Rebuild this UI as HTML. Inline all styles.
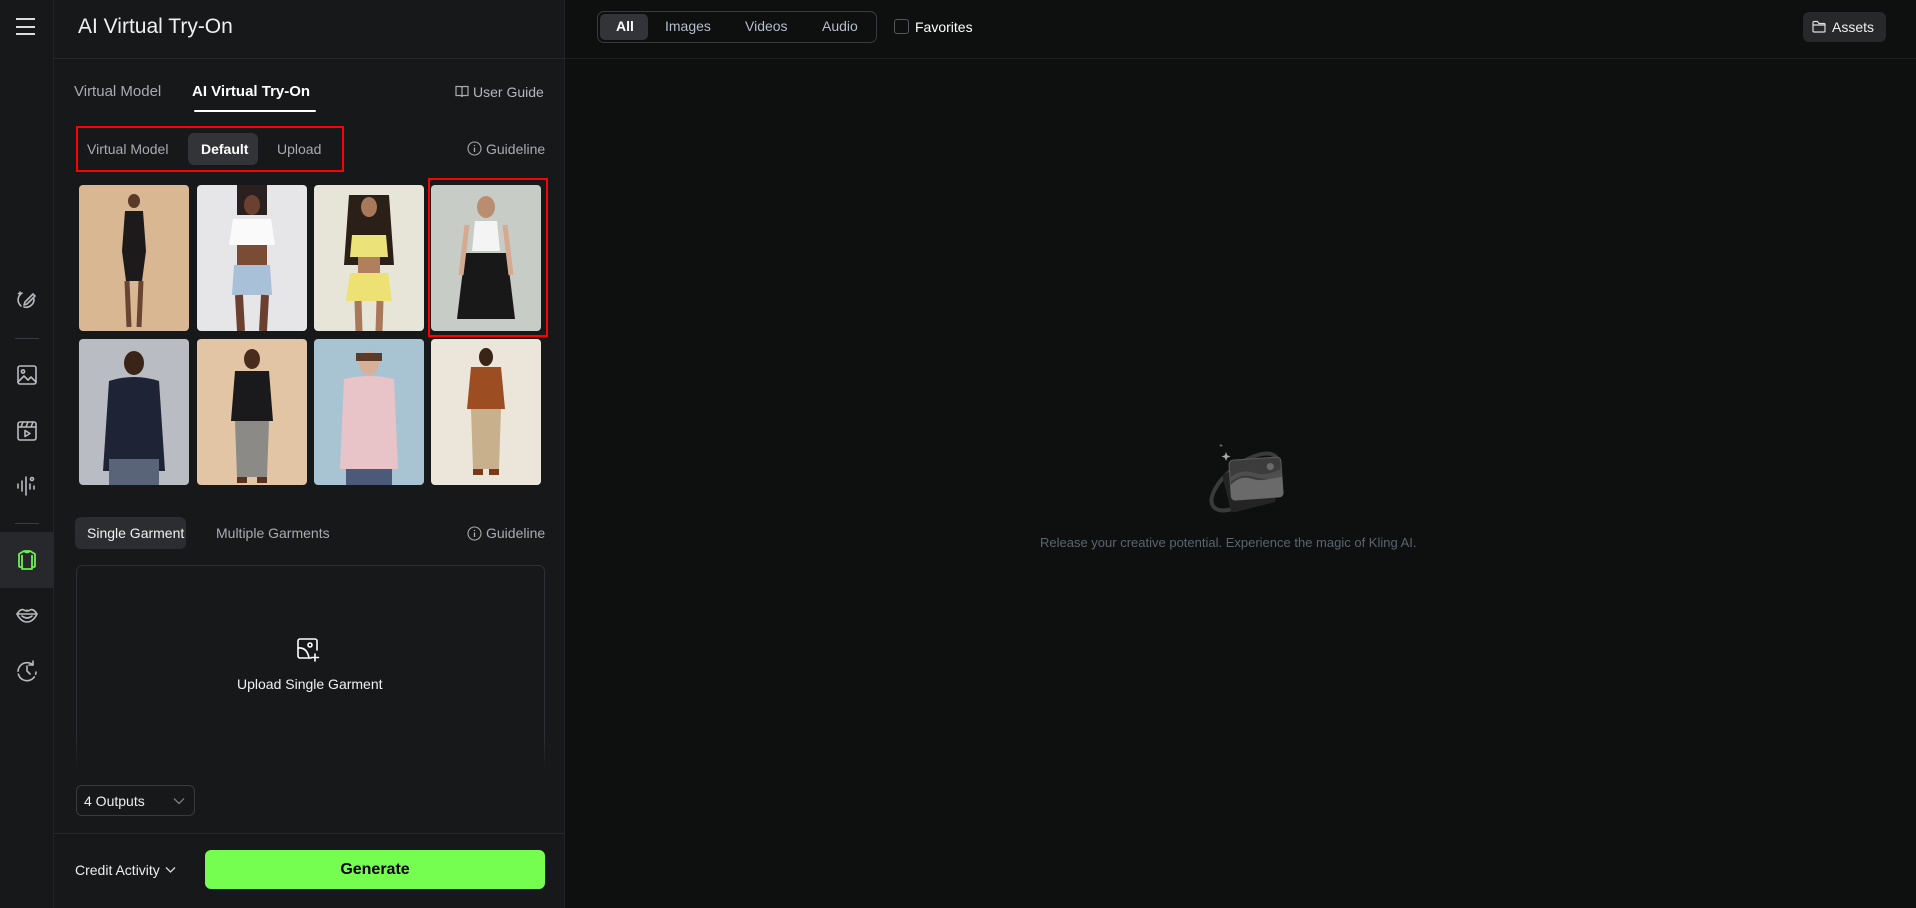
<!DOCTYPE html>
<html><head><meta charset="utf-8"><style>
*{box-sizing:border-box;margin:0;padding:0}
body{width:1916px;height:908px;background:#0e0f0f;font-family:"Liberation Sans",sans-serif;position:relative;overflow:hidden;color:#fff}
.a{position:absolute}
.side{left:0;top:0;width:54px;height:908px;background:#17181a;border-right:1px solid #222326}
.panel{left:54px;top:0;width:511px;height:908px;background:#17181a;border-right:1px solid #222326}
.t{font-size:15px;color:#a9abb0;white-space:nowrap}
.ph{border-radius:4px;overflow:hidden}
.ph svg{width:100%;height:100%;display:block}
.ic{stroke:#b8babd;fill:none;stroke-width:1.6;stroke-linecap:round;stroke-linejoin:round}
</style></head><body>
<div class="a side"></div>
<div class="a panel"></div>
<div class="a" style="left:54px;top:58px;width:511px;height:1px;background:#26272a"></div>
<div class="a" style="left:565px;top:58px;width:1351px;height:1px;background:#1d1e1f"></div>
<div class="a" style="left:16px;top:18px;width:19px;height:2px;background:#ddd"></div>
<div class="a" style="left:16px;top:26px;width:19px;height:2px;background:#ddd"></div>
<div class="a" style="left:16px;top:33px;width:19px;height:2px;background:#ddd"></div>
<svg class="a" style="left:15px;top:289px" width="24" height="22" viewBox="0 0 24 22"><g class="ic"><path d="M6 17a8 8 0 0 1 1-13"/><path d="M9 18a8 8 0 0 0 10-8"/><path d="M10 13l8-8 2 2-8 8-3 1z"/><path d="M5 3v3M3.5 4.5h3"/></g></svg>
<div class="a" style="left:15px;top:338px;width:24px;height:1px;background:#3a3b3e"></div>
<svg class="a" style="left:16px;top:364px" width="22" height="22" viewBox="0 0 22 22"><g class="ic"><rect x="2" y="2" width="18" height="18" rx="2"/><circle cx="7" cy="7.5" r="1.6"/><path d="M2 18l6-6 4 4 3-3 5 5"/></g></svg>
<svg class="a" style="left:16px;top:420px" width="22" height="22" viewBox="0 0 22 22"><g class="ic"><rect x="2" y="2" width="18" height="18" rx="2"/><path d="M2 7h18M7 2l-2 5M12 2l-2 5M17 2l-2 5"/><path d="M9 10.5v6l5-3z"/></g></svg>
<svg class="a" style="left:16px;top:475px" width="22" height="22" viewBox="0 0 22 22"><g class="ic"><path d="M2 9v4M6 6v10M10 2v18M14 9v5M18 11v3"/><circle cx="16" cy="4" r="1.5"/></g></svg>
<div class="a" style="left:15px;top:523px;width:24px;height:1px;background:#3a3b3e"></div>
<div class="a" style="left:0;top:532px;width:54px;height:56px;background:#27282b"></div>
<svg class="a" style="left:16px;top:549px" width="22" height="22" viewBox="0 0 22 22"><g fill="none" stroke="#6cf04f" stroke-width="1.8" stroke-linejoin="round"><path d="M8 2h6l5 3v12a1 1 0 0 1-1 1h-2v2H6v-2H4a1 1 0 0 1-1-1V5z"/><path d="M6 6v12M16 6v12M8 2q3 3 6 0"/></g></svg>
<svg class="a" style="left:15px;top:606px" width="24" height="18" viewBox="0 0 24 18"><g class="ic"><path d="M2 8q4-6 7-4q3 2 3 0q0 2 3 0q3-2 7 4q-4 8-10 8t-10-8z"/><path d="M2 8h20M7 10q5 4 10 0"/></g></svg>
<svg class="a" style="left:16px;top:660px" width="22" height="22" viewBox="0 0 22 22"><g class="ic"><path d="M17 5a9 9 0 1 0 3 7" stroke-dasharray="20 3"/><path d="M11 6v5l3 3M17 1v4h-4"/></g></svg>

<div class="a" style="left:78px;top:15px;font-size:21px;color:#f0f0f0">AI Virtual Try-On</div>
<div class="a t" style="left:74px;top:83px;font-size:15px">Virtual Model</div>
<div class="a" style="left:192px;top:83px;font-size:15px;font-weight:bold;color:#fff">AI Virtual Try-On</div>
<div class="a" style="left:194px;top:110px;width:122px;height:2px;background:#fff;border-radius:1px"></div>
<svg class="a" style="left:455px;top:85px" width="14" height="13" viewBox="0 0 14 13"><g fill="none" stroke="#aaa" stroke-width="1.2"><path d="M1 1.5h4.5q1.5 0 1.5 1.5v9q0-1.5-1.5-1.5H1zM13 1.5H8.5Q7 1.5 7 3v9q0-1.5 1.5-1.5H13z"/></g></svg>
<div class="a t" style="left:473px;top:84px;font-size:14px;color:#b5b7bb">User Guide</div>

<div class="a" style="left:76px;top:126px;width:268px;height:46px;border:2px solid #f00"></div>
<div class="a t" style="left:87px;top:141px;font-size:14px">Virtual Model</div>
<div class="a" style="left:188px;top:133px;width:70px;height:32px;background:#333437;border-radius:6px"></div>
<div class="a" style="left:201px;top:141px;font-size:14px;font-weight:bold;color:#fff">Default</div>
<div class="a t" style="left:277px;top:141px;font-size:14px">Upload</div>
<svg class="a" style="left:467px;top:141px" width="15" height="15" viewBox="0 0 15 15"><circle cx="7.5" cy="7.5" r="6.5" fill="none" stroke="#aaa" stroke-width="1.1"/><path d="M7.5 6.5v4.5M7.5 4v1" stroke="#aaa" stroke-width="1.3"/></svg>
<div class="a t" style="left:486px;top:141px;font-size:14px">Guideline</div>

<div class="a ph" style="left:79px;top:185px;width:110px;height:146px"><svg viewBox="0 0 110 146"><rect width="110" height="146" fill="#d9b793"/><ellipse cx="55" cy="16" rx="6" ry="7" fill="#5a3a28"/><path d="M46 26h18l3 40-4 30H47l-4-30z" fill="#1c1a1a"/><path d="M48 96l2 46M62 96l-2 46" stroke="#6a4432" stroke-width="5"/></svg></div>
<div class="a ph" style="left:197px;top:185px;width:110px;height:146px"><svg viewBox="0 0 110 146"><rect width="110" height="146" fill="#e6e6e8"/><path d="M40 0h30v30H40z" fill="#2a2020"/><ellipse cx="55" cy="20" rx="8" ry="10" fill="#6b4030"/><path d="M36 34h38l4 26H32z" fill="#fafafa"/><path d="M40 60h30v20H40z" fill="#7a4c36"/><path d="M37 80h36l2 30H35z" fill="#a8c0d8"/><path d="M42 110l2 36M68 110l-2 36" stroke="#6b4030" stroke-width="8"/></svg></div>
<div class="a ph" style="left:314px;top:185px;width:110px;height:146px"><svg viewBox="0 0 110 146"><rect width="110" height="146" fill="#e7e5d8"/><path d="M35 10h40l5 70H30z" fill="#2a2018"/><ellipse cx="55" cy="22" rx="8" ry="10" fill="#a8785a"/><path d="M38 50h34l2 22H36z" fill="#ece27a"/><path d="M44 72h22v16H44z" fill="#b0805e"/><path d="M36 88h38l4 28H32z" fill="#ede174"/><path d="M44 116l1 30M66 116l-1 30" stroke="#a8785a" stroke-width="7"/></svg></div>
<div class="a ph" style="left:431px;top:185px;width:110px;height:146px"><svg viewBox="0 0 110 146"><rect width="110" height="146" fill="#c8ccc6"/><ellipse cx="55" cy="22" rx="9" ry="11" fill="#b88d70"/><path d="M44 36h22l3 30H41z" fill="#f4f4f4"/><path d="M34 68h42l8 66H26z" fill="#181818"/><path d="M36 40l-6 50M74 40l6 50" stroke="#d4aa90" stroke-width="5"/></svg></div>
<div class="a" style="left:428px;top:178px;width:120px;height:159px;border:2px solid #f00"></div>

<div class="a ph" style="left:79px;top:339px;width:110px;height:146px"><svg viewBox="0 0 110 146"><rect width="110" height="146" fill="#b9bcc3"/><ellipse cx="55" cy="24" rx="10" ry="12" fill="#3a2418"/><path d="M30 42q25-8 50 0l6 90H24z" fill="#1f2336"/><path d="M30 120h50v26H30z" fill="#5a6478"/></svg></div>
<div class="a ph" style="left:197px;top:339px;width:110px;height:146px"><svg viewBox="0 0 110 146"><rect width="110" height="146" fill="#e2c5a4"/><ellipse cx="55" cy="20" rx="8" ry="10" fill="#4a2c1c"/><path d="M38 32h34l4 50H34z" fill="#1a1a1c"/><path d="M38 82h34l-2 56H40z" fill="#8c8a86"/><path d="M40 138h10v6H40zM60 138h10v6H60z" fill="#5a3020"/></svg></div>
<div class="a ph" style="left:314px;top:339px;width:110px;height:146px"><svg viewBox="0 0 110 146"><rect width="110" height="146" fill="#a8c4d2"/><ellipse cx="55" cy="24" rx="10" ry="12" fill="#d8b09a"/><path d="M42 14h26v8H42z" fill="#5a3a28"/><path d="M30 40q25-6 50 0l4 90H26z" fill="#e8c4c8"/><path d="M32 130h46v16H32z" fill="#4a5a78"/></svg></div>
<div class="a ph" style="left:431px;top:339px;width:110px;height:146px"><svg viewBox="0 0 110 146"><rect width="110" height="146" fill="#ece6da"/><ellipse cx="55" cy="18" rx="7" ry="9" fill="#3a2418"/><path d="M40 28h30l4 42H36z" fill="#9c4e22"/><path d="M40 70h30l-2 60H42z" fill="#c8b08c"/><path d="M42 130h10v6H42zM58 130h10v6H58z" fill="#7a3a1a"/></svg></div>

<div class="a" style="left:75px;top:517px;width:111px;height:32px;background:#2c2d30;border-radius:6px"></div>
<div class="a" style="left:87px;top:525px;font-size:14px;color:#f0f0f0">Single Garment</div>
<div class="a t" style="left:216px;top:525px;font-size:14px">Multiple Garments</div>
<svg class="a" style="left:467px;top:526px" width="15" height="15" viewBox="0 0 15 15"><circle cx="7.5" cy="7.5" r="6.5" fill="none" stroke="#aaa" stroke-width="1.1"/><path d="M7.5 6.5v4.5M7.5 4v1" stroke="#aaa" stroke-width="1.3"/></svg>
<div class="a t" style="left:486px;top:525px;font-size:14px">Guideline</div>

<div class="a" style="left:76px;top:565px;width:469px;height:205px;border:1px solid #2e2f32;border-bottom:none;border-radius:6px 6px 0 0;-webkit-mask-image:linear-gradient(#000 85%,transparent)"></div>
<svg class="a" style="left:296px;top:637px" width="26" height="26" viewBox="0 0 26 26"><g fill="none" stroke="#fff" stroke-width="1.6" stroke-linecap="round"><path d="M15 21H4a2 2 0 0 1-2-2V4a2 2 0 0 1 2-2h15a2 2 0 0 1 2 2v9"/><path d="M2 11q9-1 11 10"/><circle cx="14" cy="8" r="2"/><path d="M19 17v7M15.5 20.5h7"/></g></svg>
<div class="a" style="left:237px;top:676px;font-size:14px;color:#f2f2f2">Upload Single Garment</div>

<div class="a" style="left:76px;top:785px;width:119px;height:31px;border:1px solid #3a3b3e;border-radius:6px"></div>
<div class="a" style="left:84px;top:793px;font-size:14px;color:#eee">4 Outputs</div>
<svg class="a" style="left:173px;top:797px" width="12" height="8" viewBox="0 0 12 8"><path d="M1 1.5l5 5 5-5" fill="none" stroke="#888" stroke-width="1.2"/></svg>
<div class="a" style="left:54px;top:833px;width:511px;height:1px;background:#26272a"></div>
<div class="a" style="left:75px;top:862px;font-size:14px;color:#eee">Credit Activity</div>
<svg class="a" style="left:165px;top:866px" width="11" height="8" viewBox="0 0 11 8"><path d="M1 1.5l4.5 4.5 4.5-4.5" fill="none" stroke="#ddd" stroke-width="1.3"/></svg>
<div class="a" style="left:205px;top:850px;width:340px;height:39px;background:#75fd50;border-radius:6px;color:#000;font-weight:bold;font-size:16px;text-align:center;line-height:39px">Generate</div>

<div class="a" style="left:597px;top:11px;width:280px;height:32px;border:1px solid #3a3b3d;border-radius:7px"></div>
<div class="a" style="left:600px;top:14px;width:48px;height:26px;background:#333437;border-radius:5px"></div>
<div class="a" style="left:616px;top:18px;font-size:14px;font-weight:bold;color:#fff">All</div>
<div class="a t" style="left:665px;top:18px;font-size:14px;color:#b5bccb">Images</div>
<div class="a t" style="left:745px;top:18px;font-size:14px;color:#b5bccb">Videos</div>
<div class="a t" style="left:822px;top:18px;font-size:14px;color:#b5bccb">Audio</div>
<div class="a" style="left:894px;top:19px;width:15px;height:15px;border:1px solid #55575a;border-radius:3px"></div>
<div class="a" style="left:915px;top:19px;font-size:14px;color:#fff">Favorites</div>
<div class="a" style="left:1803px;top:12px;width:83px;height:30px;background:#27282a;border-radius:6px"></div>
<svg class="a" style="left:1812px;top:20px" width="14" height="13" viewBox="0 0 14 13"><path d="M1 2.5a1 1 0 0 1 1-1h3.5l1.5 2h5a1 1 0 0 1 1 1V11a1 1 0 0 1-1 1H2a1 1 0 0 1-1-1zM1 5h12" fill="none" stroke="#ddd" stroke-width="1.2"/></svg>
<div class="a" style="left:1832px;top:19px;font-size:14px;color:#eee">Assets</div>

<!-- empty state -->
<svg class="a" style="left:1200px;top:440px" width="90" height="80" viewBox="0 0 90 80">
<ellipse cx="45" cy="42" rx="40" ry="18" fill="none" stroke="#3a3a3b" stroke-width="4" transform="rotate(-38 45 42)"/>
<rect x="26" y="28" width="46" height="40" rx="3" fill="#242425" transform="rotate(-14 49 48)"/>
<g transform="rotate(-4 50 38)">
<rect x="30" y="19" width="52" height="40" rx="4" fill="#3c3c3d" stroke="#5c5c5d" stroke-width="1"/>
<path d="M30 44q10-10 22-5t30-3v19a4 4 0 0 1-4 4H34a4 4 0 0 1-4-4z" fill="#6a6a6b"/>
<path d="M30 36q12-8 24-3t28-2v8q-16 3-28-2t-24 4z" fill="#4e4e4f"/>
<circle cx="71" cy="28" r="3.6" fill="#6a6a6b"/></g>
<path d="M26 12l1.2 3.3 3.3 1.2-3.3 1.2L26 21l-1.2-3.3-3.3-1.2 3.3-1.2z" fill="#aaa"/>
<path d="M21 4v3M19.5 5.5h3" stroke="#777" stroke-width="0.8"/></svg>
<div class="a" style="left:1040px;top:535px;font-size:13px;color:#5c6470">Release your creative potential. Experience the magic of Kling AI.</div>
</body></html>
